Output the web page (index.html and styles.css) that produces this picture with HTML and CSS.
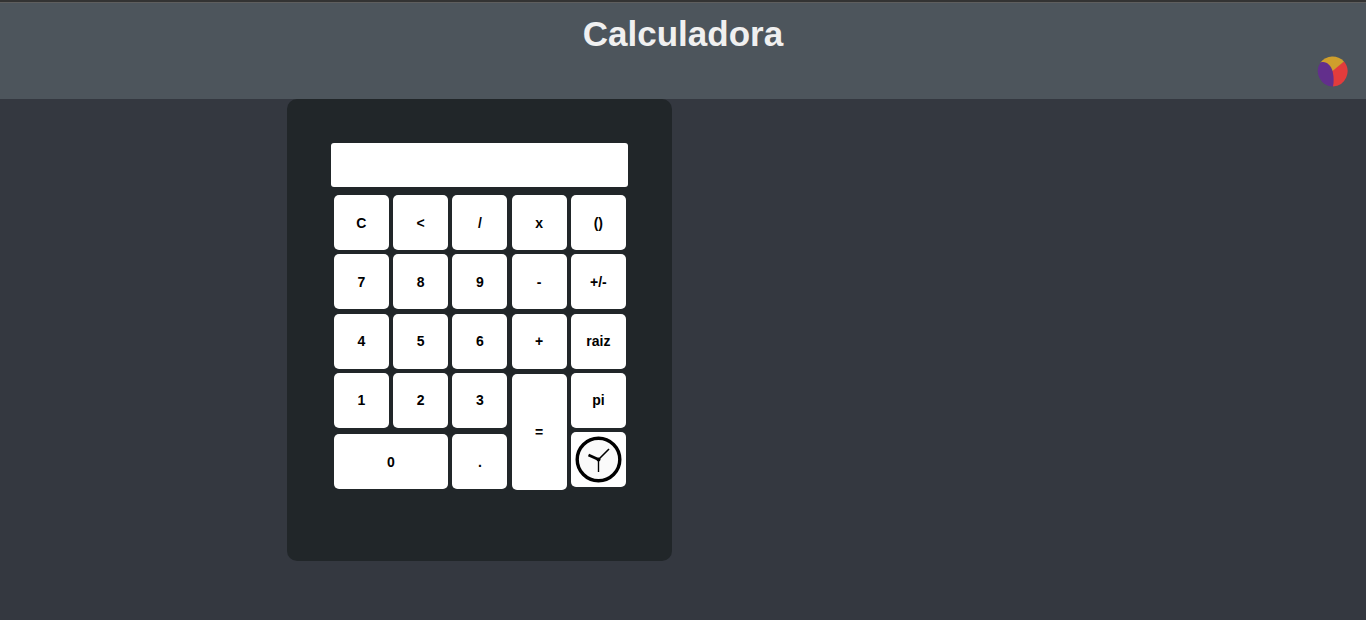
FILE: index.html
```html
<!DOCTYPE html>
<html lang="pt-BR">
<head>
<meta charset="utf-8">
<title>Calculadora</title>
<link rel="stylesheet" href="styles.css">
</head>
<body>
<header class="header">
  <h1 class="title">Calculadora</h1>
  <button class="theme" type="button" aria-label="Tema">
    <svg viewBox="0 0 32 32" width="32" height="32" aria-hidden="true">
      <path fill="#e23c3c" d="M15 15 27 6.500A15.300 15.300 0 0 1 16 31.500Z"/>
      <path fill="#cf9f2c" d="M3.500 7.500A15.300 15.300 0 0 1 27 6.500L15.500 16 9 13Z"/>
      <path fill="#622f8c" d="M3.500 7.500C9 5.500 14 10.500 15.500 16Q17.500 24 16 31.500A15.400 15.400 0 0 1 3.500 7.500Z"/>
    </svg>
  </button>
</header>
<main class="main">
  <section class="calculator">
    <input class="display" type="text" aria-label="Visor">
    <div class="keys">
      <button class="key">C</button>
      <button class="key">&lt;</button>
      <button class="key">/</button>
      <button class="key">x</button>
      <button class="key">()</button>
      <button class="key">7</button>
      <button class="key">8</button>
      <button class="key">9</button>
      <button class="key">-</button>
      <button class="key">+/-</button>
      <button class="key">4</button>
      <button class="key">5</button>
      <button class="key">6</button>
      <button class="key">+</button>
      <button class="key">raiz</button>
      <button class="key">1</button>
      <button class="key">2</button>
      <button class="key">3</button>
      <button class="key equals">=</button>
      <button class="key">pi</button>
      <button class="key zero">0</button>
      <button class="key point">.</button>
      <button class="key history" aria-label="Histórico">
        <svg viewBox="0 0 48 48" width="48" height="48" aria-hidden="true" fill="none" stroke="#000">
          <circle cx="24.500" cy="23.500" r="21.300" fill="#fafafa" stroke-width="3.400"/>
          <path stroke-width="2.800" d="M14.500 19 24.500 23.500"/>
          <path stroke-width="1.600" d="M24 24 35 13"/>
          <path stroke-width="1.400" d="M24.500 23V36"/>
          <circle cx="24.500" cy="23.500" r="2" fill="#000" stroke="none"/>
        </svg>
      </button>
    </div>
  </section>
</main>
</body>
</html>
```
FILE: styles.css
```css
* {
  box-sizing: border-box;
}

body {
  margin: 0;
  min-height: 100vh;
  border-top: 2px solid #333333;
  background: #343840;
  font-family: "Liberation Sans", Arial, sans-serif;
}

.header {
  display: flex;
  flex-direction: column;
  padding: 10px 17px 12px;
  border-top: 1px solid #5e5e5e;
  background: #4d555c;
}

.title {
  margin: 0;
  color: #f0f0f0;
  font-size: 35px;
  line-height: 42px;
  text-align: center;
}

.theme {
  align-self: flex-end;
  width: 32px;
  height: 32px;
  padding: 0;
  border: 0;
  background: none;
}

.theme svg,
.history svg {
  display: block;
}

.main {
  padding-left: 21%;
}

.calculator {
  width: max-content;
  padding: 44px 44px 74px;
  border-radius: 10px;
  background: #212629;
}

.display {
  display: block;
  width: 297px;
  height: 44px;
  margin-bottom: 8px;
  padding: 0 8px;
  border: 0;
  border-radius: 3px;
  background: #ffffff;
  font-size: 20px;
}

.keys {
  display: grid;
  grid-template-columns: repeat(5, 55px);
  grid-template-rows: repeat(5, 55px);
  place-content: space-between;
  align-items: start;
  width: 292px;
  height: 292px;
  margin-left: 3px;
}

.key {
  height: 55px;
  padding: 0;
  border: 0;
  border-radius: 5px;
  background: #ffffff;
  color: #000000;
  font-family: inherit;
  font-size: 14px;
  font-weight: bold;
}

.equals {
  grid-row: span 2;
  height: 116px;
  margin-top: 1px;
}

.zero {
  grid-column: span 2;
  margin-top: 2px;
}

.point {
  margin-top: 2px;
}

.history {
  display: grid;
  place-items: center;
}
```
